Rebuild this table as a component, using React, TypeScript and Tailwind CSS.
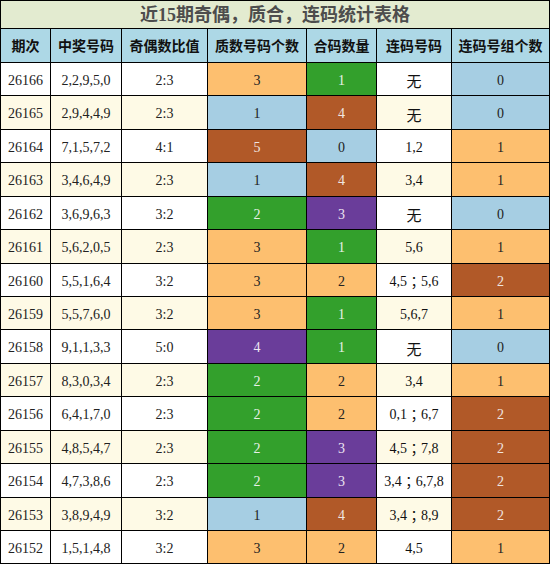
import React from "react";

type C = "o" | "b" | "g" | "r" | "p";
const bg: Record<C, string> = {
  o: "bg-[#fdbf6f] text-[#222]",
  b: "bg-[#a6cee3] text-[#222]",
  g: "bg-[#33a02c] text-[#e8f0e8]",
  r: "bg-[#b15928] text-[#f0e6e0]",
  p: "bg-[#6a3d9a] text-[#ece6f2]",
};

const rows: [string, string, string, string, C, string, C, string, string, C][] = [
  ["26166", "2,2,9,5,0", "2:3", "3", "o", "1", "g", "无", "0", "b"],
  ["26165", "2,9,4,4,9", "2:3", "1", "b", "4", "r", "无", "0", "b"],
  ["26164", "7,1,5,7,2", "4:1", "5", "r", "0", "b", "1,2", "1", "o"],
  ["26163", "3,4,6,4,9", "2:3", "1", "b", "4", "r", "3,4", "1", "o"],
  ["26162", "3,6,9,6,3", "3:2", "2", "g", "3", "p", "无", "0", "b"],
  ["26161", "5,6,2,0,5", "2:3", "3", "o", "1", "g", "5,6", "1", "o"],
  ["26160", "5,5,1,6,4", "3:2", "3", "o", "2", "o", "4,5；5,6", "2", "r"],
  ["26159", "5,5,7,6,0", "3:2", "3", "o", "1", "g", "5,6,7", "1", "o"],
  ["26158", "9,1,1,3,3", "5:0", "4", "p", "1", "g", "无", "0", "b"],
  ["26157", "8,3,0,3,4", "2:3", "2", "g", "2", "o", "3,4", "1", "o"],
  ["26156", "6,4,1,7,0", "2:3", "2", "g", "2", "o", "0,1；6,7", "2", "r"],
  ["26155", "4,8,5,4,7", "2:3", "2", "g", "3", "p", "4,5；7,8", "2", "r"],
  ["26154", "4,7,3,8,6", "2:3", "2", "g", "3", "p", "3,4；6,7,8", "2", "r"],
  ["26153", "3,8,9,4,9", "3:2", "1", "b", "4", "r", "3,4；8,9", "2", "r"],
  ["26152", "1,5,1,4,8", "3:2", "3", "o", "2", "o", "4,5", "1", "o"],
];

const heights = ["h-[33px]", "h-[34px]", "h-[33px]", "h-[34px]", "h-[33px]", "h-[34px]", "h-[33px]", "h-[33px]", "h-[34px]", "h-[33px]", "h-[34px]", "h-[33px]", "h-[34px]", "h-[33px]", "h-[33px]"];

const headers = ["期次", "中奖号码", "奇偶数比值", "质数号码个数", "合码数量", "连码号码", "连码号组个数"];

const cell = "border-r border-b border-black flex items-center justify-center";

function Lian({ v }: { v: string }) {
  if (v === "无") {
    return (
      <span className="text-[15px] pt-[3px]" style={{ fontFamily: '"Noto Sans CJK SC", sans-serif' }}>
        无
      </span>
    );
  }
  const parts = v.split("；");
  if (parts.length === 1) return <>{v}</>;
  return (
    <span className="flex items-center">
      {parts[0]}
      <span className="text-[14px]" style={{ fontFamily: '"Noto Sans CJK TC", sans-serif' }}>
        ；
      </span>
      {parts[1]}
    </span>
  );
}

export default function App() {
  return (
    <div className="w-[550px] h-[565px] bg-white">
      <div
        className="grid grid-cols-[50px_71px_86px_99px_70px_75px_98px] border-l border-t border-black w-[550px]"
        style={{ fontFamily: '"Liberation Serif", "Noto Sans CJK SC", serif' }}
      >
        <div className={`${cell} col-span-7 h-[28px] bg-[#e3ebd0] text-[#4d4d4d] font-bold text-[18px] leading-none`}>
          近15期奇偶，质合，连码统计表格
        </div>
        {headers.map((h) => (
          <div
            key={h}
            className={`${cell} h-[34px] bg-[#add8e6] text-[#111] font-bold text-[14px]`}
            style={{ fontFamily: '"Noto Sans CJK SC", sans-serif' }}
          >
            {h}
          </div>
        ))}
        {rows.map((r, i) => {
          const plain = i % 2 === 0 ? "bg-white" : "bg-[#fefae6]";
          const h = heights[i];
          const base = `${cell} ${h} text-[14px] pt-[2px]`;
          return (
            <React.Fragment key={r[0]}>
              <div className={`${base} ${plain} text-[#222]`}>{r[0]}</div>
              <div className={`${base} ${plain} text-[#222]`}>{r[1]}</div>
              <div className={`${base} ${plain} text-[#222]`}>{r[2]}</div>
              <div className={`${base} ${bg[r[4]]}`}>{r[3]}</div>
              <div className={`${base} ${bg[r[6]]}`}>{r[5]}</div>
              <div className={`${base} ${plain} text-[#111]`}>
                <Lian v={r[7]} />
              </div>
              <div className={`${base} ${bg[r[9]]}`}>{r[8]}</div>
            </React.Fragment>
          );
        })}
      </div>
    </div>
  );
}
